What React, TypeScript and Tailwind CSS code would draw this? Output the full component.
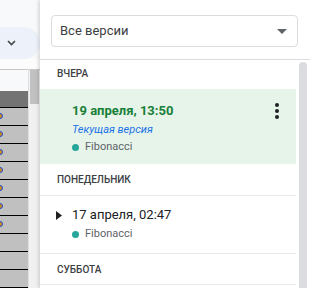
const rows = [true, true, true, true, true, true, true, false, false, false];

function Fib() {
  return (
    <div className="flex h-[18px] items-center gap-[6px] text-[11px] text-[#5f6368]">
      <span className="h-[7px] w-[7px] rounded-full bg-[#26a69a]" />
      <span>Fibonacci</span>
    </div>
  );
}

export default function App() {
  return (
    <div className="relative flex h-[288px] w-[310px] overflow-hidden bg-white font-['Roboto',_'Liberation_Sans',_sans-serif]">
      {/* sheet strip on the left */}
      <div className="flex w-[40px] shrink-0 flex-col bg-[#f8f9fa]">
        <div className="h-[28px]" />
        <div className="flex h-[34px] items-center rounded-r-full bg-[#edf2fa] pl-[7px]">
          <svg width="9" height="6" viewBox="0 0 9 6">
            <path d="M1 1l3.5 3.5L8 1" fill="none" stroke="#444746" strokeWidth="1.6" />
          </svg>
        </div>
        <div className="h-[10px] bg-[#fcfcfc]" />
        <div className="flex flex-1">
          <div className="w-[28px] border-t border-[#c7c7c7]">
            <div className="h-[21px] bg-[#f8f9fa]" />
            <div className="h-[17px] border-b border-black bg-[#737373]" />
            {rows.map((dot, i) => (
              <div key={i} className="relative h-[18px] border-b border-black bg-[#c0c0c0]">
                {dot && <span className="absolute left-[-3px] top-[5px] h-[6px] w-[6px] rounded-full border border-[#1a4bd6] bg-[#d08a1a]" />}
              </div>
            ))}
          </div>
          <div className="w-[1px] bg-[#e0e0e0]" />
          <div className="w-[11px] border-t border-[#c7c7c7] bg-[#f1f1f1] pl-[1px]">
            <div className="h-[34px] w-[9px] bg-[#c1c1c1]" />
          </div>
        </div>
      </div>

      {/* version history panel */}
      <div className="relative z-10 flex w-[270px] shrink-0 flex-col bg-white shadow-[-1px_0_4px_rgba(0,0,0,0.18)]">
        <div className="px-[11px] pr-[12px] pt-[15px]">
          <div className="flex h-[32px] items-center justify-between rounded-[4px] border border-[#dadce0] pl-[8px] pr-[10px] text-[13px] text-[#3c4043]">
            <span>Все версии</span>
            <svg width="10" height="5" viewBox="0 0 10 5">
              <path d="M0 0h10L5 5z" fill="#5f6368" />
            </svg>
          </div>
        </div>
        <div className="mt-[12px] flex flex-1 border-t border-[#dadce0]">
          <div className="w-[256px]">
            <div className="flex h-[29px] items-center pb-[3px] pl-[17px] text-[10px] font-medium text-[#3c4043]">ВЧЕРА</div>
            <div className="relative h-[75px] bg-[#e6f4ea] pl-[32px] pt-[12px]">
              <div className="h-[20px] text-[13px] font-bold leading-[20px] text-[#188038]">19 апреля, 13:50</div>
              <div className="h-[17px] text-[11px] italic leading-[17px] text-[#1a73e8]">Текущая версия</div>
              <Fib />
              <div className="absolute right-[17px] top-[14px] flex flex-col gap-[2px]">
                <span className="h-[4px] w-[4px] rounded-full bg-[#202124]" />
                <span className="h-[4px] w-[4px] rounded-full bg-[#202124]" />
                <span className="h-[4px] w-[4px] rounded-full bg-[#202124]" />
              </div>
            </div>
            <div className="flex h-[32px] items-center border-b border-[#e8eaed] pl-[17px] text-[10px] font-medium text-[#3c4043]">ПОНЕДЕЛЬНИК</div>
            <div className="h-[58px] border-b border-[#e8eaed] pl-[16px] pt-[9px]">
              <div className="flex h-[20px] items-center">
                <svg width="6" height="9" viewBox="0 0 6 9" className="mr-[10px]">
                  <path d="M0 0l6 4.5L0 9z" fill="#202124" />
                </svg>
                <span className="text-[13px] text-[#202124]">17 апреля, 02:47</span>
              </div>
              <div className="pl-[16px]">
                <Fib />
              </div>
            </div>
            <div className="flex h-[31px] items-center border-b border-[#e8eaed] pl-[17px] text-[10px] font-medium text-[#3c4043]">СУББОТА</div>
          </div>
          <div className="ml-[3px] mt-[2px] w-[8px] rounded-t-full bg-[#dadce0]" />
        </div>
      </div>
    </div>
  );
}
